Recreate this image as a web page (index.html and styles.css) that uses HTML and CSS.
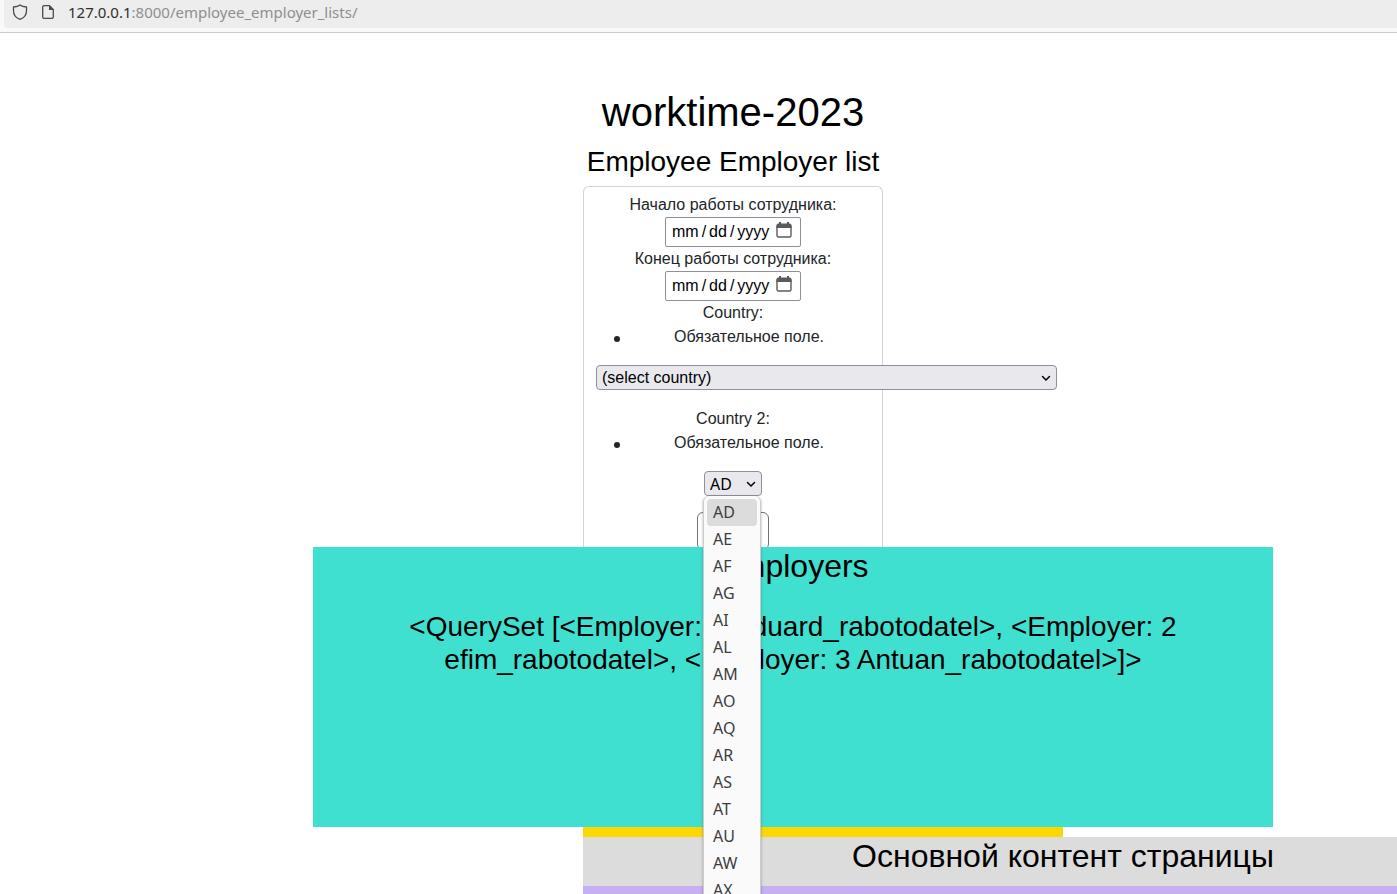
FILE: index.html
```html
<!DOCTYPE html>
<html lang="ru">
<head>
<meta charset="utf-8">
<title>worktime-2023</title>
<link rel="stylesheet" href="styles.css">
</head>
<body>
<header class="toolbar">
  <div class="address">
    <svg class="address-icon" viewBox="0 0 16 16" aria-hidden="true"><path d="M8 .9C6.500 2 4.300 2.700 1.500 3v3.700C1.500 10.700 4.200 14 8 15.300 11.800 14 14.500 10.700 14.500 6.700V3C11.700 2.700 9.500 2 8 .9z" fill="none" stroke="#4a4a4a" stroke-width="1.300" stroke-linejoin="round"/></svg>
    <svg class="address-icon" viewBox="0 0 16 16" aria-hidden="true"><path d="M4 1.700h5.500L13.300 5.500V13a1.300 1.300 0 0 1-1.300 1.300H4A1.300 1.300 0 0 1 2.700 13V3A1.300 1.300 0 0 1 4 1.700z" fill="none" stroke="#4a4a4a" stroke-width="1.300"/><path d="M9 1.500V6h4.500z" fill="#4a4a4a"/></svg>
    <span class="url"><span class="host">127.0.0.1</span>:8000/employee_employer_lists/</span>
  </div>
</header>
<main class="page">
  <div class="form-column">
    <h1 class="title">worktime-2023</h1>
    <h2 class="subtitle">Employee Employer list</h2>
    <form class="card">
      <label class="label" for="start">Начало работы сотрудника:</label>
      <input class="date" type="date" id="start">
      <label class="label" for="end">Конец работы сотрудника:</label>
      <input class="date" type="date" id="end">
      <label class="label" for="country">Country:</label>
      <ul class="errors"><li class="error">Обязательное поле.</li></ul>
      <select class="select select-wide" id="country"><option>(select country)</option></select>
      <label class="label" for="country2">Country 2:</label>
      <ul class="errors"><li class="error">Обязательное поле.</li></ul>
      <div class="picker">
        <select class="select select-code" id="country2"><option>AD</option></select>
        <ul class="menu" role="listbox" aria-label="Country 2">
          <li class="option selected" role="option" aria-selected="true">AD</li>
          <li class="option" role="option">AE</li>
          <li class="option" role="option">AF</li>
          <li class="option" role="option">AG</li>
          <li class="option" role="option">AI</li>
          <li class="option" role="option">AL</li>
          <li class="option" role="option">AM</li>
          <li class="option" role="option">AO</li>
          <li class="option" role="option">AQ</li>
          <li class="option" role="option">AR</li>
          <li class="option" role="option">AS</li>
          <li class="option" role="option">AT</li>
          <li class="option" role="option">AU</li>
          <li class="option" role="option">AW</li>
          <li class="option" role="option">AX</li>
        </ul>
      </div>
      <button class="submit" type="submit" aria-label="OK"></button>
    </form>
  </div>
  <section class="employers">
    <h2 class="heading">Employers</h2>
    <p class="queryset">&lt;QuerySet [&lt;Employer: 1 Eduard_rabotodatel&gt;, &lt;Employer: 2 efim_rabotodatel&gt;, &lt;Employer: 3 Antuan_rabotodatel&gt;]&gt;</p>
  </section>
  <div class="gold"></div>
  <section class="content"><h2 class="heading">Основной контент страницы</h2></section>
  <div class="footer"></div>
</main>
</body>
</html>
```
FILE: styles.css
```css
* { box-sizing: border-box; }
html, body { margin: 0; height: 100%; }
body {
  display: flex;
  flex-direction: column;
  overflow: hidden;
  background: #fff;
  color: #212529;
  font: 16px/24px "Liberation Sans", Arial, sans-serif;
}
h1, h2, p, ul { margin: 0; }
h1, h2, p { color: #000; font-weight: 400; text-align: center; }

.toolbar {
  flex: none;
  padding: 0 0 4px 4px;
  background: #f9f9fa;
  border-bottom: 1px solid #ccc;
}
.address {
  display: flex;
  align-items: center;
  gap: 12px;
  height: 28px;
  padding: 0 8px 4px;
  background: #ededed;
  border-radius: 0 0 0 4px;
}
.address-icon { flex: none; width: 16px; height: 16px; }
.url {
  color: #8f8f8f;
  font: 15px/24px "Noto Sans", sans-serif;
  white-space: nowrap;
}
.host { color: #303030; }

.page {
  flex: 1;
  display: flex;
  flex-direction: column;
  min-height: 0;
  padding: 55px 0 0 313px;
}
.form-column, .gold, .content, .footer { margin-left: 270px; }
.form-column { flex: none; width: 300px; }
.title { margin-bottom: 8px; font-size: 40px; line-height: 48px; }
.subtitle { margin-bottom: 6px; font-size: 28px; line-height: 36px; white-space: nowrap; }

.card {
  display: flex;
  flex-direction: column;
  align-items: center;
  height: 361px;
  padding: 6px 12px;
  border: 1px solid #ced4da;
  border-bottom: 0;
  border-radius: 6px 6px 0 0;
}
.label { flex: none; }
.date {
  flex: none;
  width: 136px;
  height: 30px;
  padding: 0 8px 0 5px;
  border: 1px solid #8f8f9d;
  border-radius: 2px;
  background: #fff;
  color: #000;
  font: inherit;
}
.date::-webkit-datetime-edit-text { padding: 0 2px; }
.date::-webkit-calendar-picker-indicator {
  width: 16px;
  height: 16px;
  margin: 0 0 4px;
  padding: 0;
  background: url("data:image/svg+xml,%3Csvg xmlns='http://www.w3.org/2000/svg' viewBox='0 0 16 16'%3E%3Cpath d='M2.500 1.500h11a2 2 0 0 1 2 2V6H.5V3.500a2 2 0 0 1 2-2zM3 0h2v3H3zM11 0h2v3h-2z' fill='%235b5b5b'/%3E%3Crect x='1' y='3' width='14' height='12' rx='1.500' fill='none' stroke='%235b5b5b' stroke-width='1.400'/%3E%3C/svg%3E") center / 16px no-repeat;
}
.errors {
  align-self: stretch;
  margin-bottom: 16px;
  padding-left: 32px;
  list-style: none;
  text-align: center;
}
.error { position: relative; }
.error::before {
  content: "";
  position: absolute;
  top: 11px;
  left: -14px;
  width: 6px;
  height: 6px;
  border-radius: 50%;
  background: #212529;
}
.select {
  display: block;
  flex: none;
  height: 25px;
  padding: 0 5px;
  appearance: none;
  border: 1px solid #8f8f9d;
  border-radius: 4px;
  background: #e9e9ed url("data:image/svg+xml,%3Csvg xmlns='http://www.w3.org/2000/svg' viewBox='0 0 10 10'%3E%3Cpath d='M1.500 3.500 5 7l3.500-3.500' fill='none' stroke='%23000' stroke-width='1.500' stroke-linecap='round'/%3E%3C/svg%3E") right 5px center / 10px no-repeat;
  color: #000;
  font: inherit;
}
.select-wide { align-self: flex-start; width: 461px; margin-bottom: 17px; }
.select-code { width: 58px; font-family: "Noto Sans", sans-serif; }
.picker { flex: none; position: relative; margin-bottom: 16px; }
.menu {
  position: absolute;
  z-index: 2;
  top: 100%;
  left: -1px;
  width: 58px;
  padding: 3px;
  border: 1px solid #ccc;
  border-top: 0;
  border-radius: 6px;
  background: #fafafa;
  box-shadow: 0 1px 3px rgba(0, 0, 0, .3);
  color: #3d3d3d;
  font: 16px/27px "Noto Sans", sans-serif;
  list-style: none;
}
.option { padding-left: 6px; border-radius: 4px; }
.selected { background: #dcdcdc; }
.submit {
  flex: none;
  width: 72px;
  height: 38px;
  border: 1px solid #6c757d;
  border-radius: 6px;
  background: #fff;
}

.employers {
  flex: none;
  position: relative;
  z-index: 1;
  max-width: 960px;
  min-height: 280px;
  background: #40e0d0;
}
.heading { font-size: 32px; line-height: 38px; }
.queryset { margin-top: 25px; font-size: 28px; line-height: 33px; }
.gold { flex: none; width: 480px; height: 10px; background: #ffd700; }
.content { flex: none; width: 960px; padding-bottom: 11px; background: #dcdcdc; }
.footer { flex: 1; width: 960px; background: #c5b0f5; }
```
